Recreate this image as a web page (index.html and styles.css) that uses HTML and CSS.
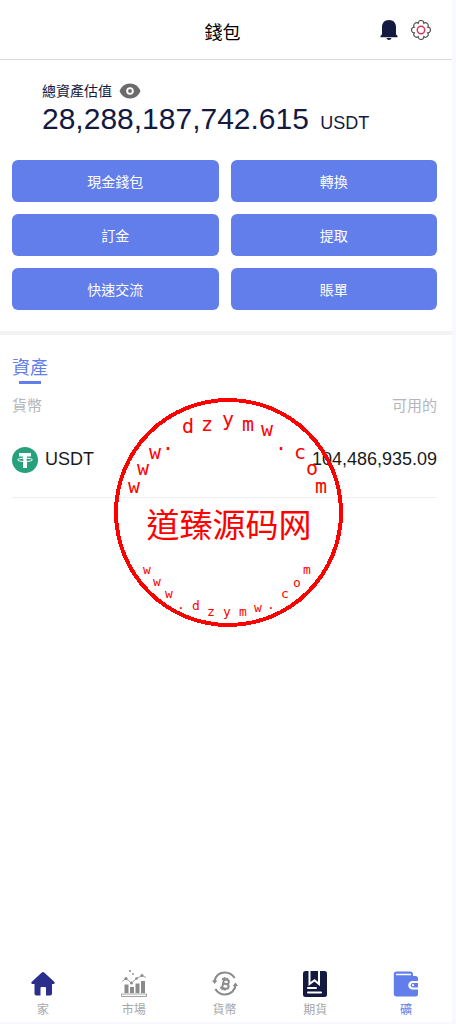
FILE: index.html
```html
<!DOCTYPE html>
<html lang="zh-Hant">
<head>
  <meta charset="UTF-8" />
  <meta name="viewport" content="width=device-width, initial-scale=1" />
  <title>錢包</title>
  <link rel="stylesheet" href="styles.css">
</head>

<body>
<div class="app">
  <header class="cabecera">
    <h1>錢包</h1>
    <div class="iconos">
      <button type="button" aria-label="通知">
        <svg width="20" height="22" viewBox="0 0 20 22" fill="#141a3f"><path d="M10 1C5.600 1 3 3.800 3 8v7.200L1.500 17v1.300h17V17L17 15.200V8c0-4.200-2.600-7-7-7zM7.600 19h4.800c-.2 1.300-1.100 2-2.400 2s-2.200-.7-2.400-2z"/></svg>
      </button>
      <button type="button" aria-label="設定">
        <svg width="20" height="20" viewBox="0 0 20 20" fill="none"><path stroke="#555" stroke-width="1.200" d="M7.200 3.300A2.800 2.800 0 0 1 12.800 3.300A2.800 2.800 0 0 1 16.700 7.200A2.800 2.800 0 0 1 16.700 12.800A2.800 2.800 0 0 1 12.800 16.700A2.800 2.800 0 0 1 7.200 16.700A2.800 2.800 0 0 1 3.300 12.800A2.800 2.800 0 0 1 3.300 7.200A2.800 2.800 0 0 1 7.200 3.300z"/><circle cx="10" cy="10" r="3.700" stroke="#e0355f" stroke-width="1.500"/></svg>
      </button>
    </div>
  </header>

  <main>
    <section class="resumen">
      <div class="saldo">
        <div class="etiqueta">
          <span>總資產估值</span>
          <button type="button" aria-label="隱藏">
            <svg width="22" height="16" viewBox="0 0 22 16"><path fill="#6b6b6b" d="M11 .5C6 .5 2.200 3.500.5 8c1.700 4.500 5.500 7.500 10.500 7.500S19.800 12.500 21.500 8C19.800 3.500 16 .5 11 .5z"/><circle cx="11" cy="8" r="3.800" fill="#fff"/><circle cx="11" cy="8" r="1.900" fill="#6b6b6b"/></svg>
          </button>
        </div>
        <p class="total">28,288,187,742.615 <small>USDT</small></p>
      </div>
      <div class="acciones">
        <button type="button">現金錢包</button>
        <button type="button">轉換</button>
        <button type="button">訂金</button>
        <button type="button">提取</button>
        <button type="button">快速交流</button>
        <button type="button">賬單</button>
      </div>
    </section>

    <section class="activos">
      <h2>資產</h2>
      <table>
        <thead>
          <tr>
            <th>貨幣</th>
            <th>可用的</th>
          </tr>
        </thead>
        <tbody>
          <tr>
            <td>
              <div class="moneda">
                <svg width="26" height="26" viewBox="0 0 26 26"><circle cx="13" cy="13" r="13" fill="#26a17b"/><path fill="#fff" d="M7 6h12v3.500h-4V12h-4V9.500H7zM11 14h4v7h-4z"/><ellipse cx="13" cy="12.800" rx="7.500" ry="1.700" fill="none" stroke="#fff"/><path fill="#fff" d="M11.300 11h3.400v4h-3.400z"/></svg>
                <span>USDT</span>
              </div>
            </td>
            <td>104,486,935.09</td>
          </tr>
        </tbody>
      </table>
    </section>
  </main>

  <nav class="menu">
    <a href="#">
      <svg width="26" height="26" viewBox="0 0 26 26" fill="#2a2f8c"><path d="M11.800 1.600a1.700 1.700 0 0 1 2.400 0l10 9.200c1 1 .5 2.200-.8 2.200H22v9.500c0 1.200-.8 2-2 2h-4V17a1 1 0 0 0-1-1h-3.500a1 1 0 0 0-1 1v7.500H6.500c-1.200 0-2-.8-2-2V13H2.600c-1.300 0-1.800-1.200-.8-2.200z"/></svg>
      <span>家</span>
    </a>
    <a href="#">
      <svg width="26" height="28" viewBox="0 0 26 28" fill="#8b8b8b"><path d="M3.500 15.500h4V24h-4zM9 18h4v6H9zM14.500 14.500h4V24h-4zM20 12h4v12h-4z"/><path fill="none" stroke="#8b8b8b" stroke-width=".8" d="M1 12.500l4-3 5.500 4.500 5-4.500L21 6.500l4 2M.5 25h25v2.500H.5z"/><circle cx="5" cy="9.500" r="1.500"/><circle cx="10.500" cy="14" r="1.500"/><circle cx="15.500" cy="9.500" r="1.300"/><circle cx="21" cy="6.500" r="1.500"/><circle cx="9" cy="2" r="1.100"/><circle cx="12" cy="5" r=".9"/></svg>
      <span>市場</span>
    </a>
    <a href="#">
      <svg width="26" height="26" viewBox="0 0 26 26" fill="none" stroke="#8b8b8b" stroke-width="2.200"><path d="M2.300 10.500C3.500 5 7.500 1.500 13 1.500c4 0 7.500 2 9.600 5.500M23.700 13.500c-.7 6-5 10-10.700 10-4 0-7.500-2-9.600-5.500"/><path fill="#8b8b8b" stroke="none" d="M0 9.500h5.400L2.600 13zM20.600 15H26l-2.500-3.500z"/><g transform="rotate(12 13 13)" stroke-width="2"><path d="M11 8.500v9M9 8.500h5c3.200 0 3.200 4.300 0 4.300h-3M9 17.500h5.500c3.500 0 3.500-4.700 0-4.700M11.500 6.500v2M14 6.500v2M11.500 17.500v2M14 17.500v2"/></g></svg>
      <span>貨幣</span>
    </a>
    <a href="#">
      <svg width="24" height="26" viewBox="0 0 24 26"><rect width="24" height="26" rx="2.500" fill="#141a3f"/><path fill="none" stroke="#fff" stroke-width="2" d="M6.500 0v13l5-3.800 4.500 3.800V0"/><path stroke="#fff" stroke-width="2" stroke-linecap="round" d="M5 17h8M5 21.500h13"/></svg>
      <span>期貨</span>
    </a>
    <a href="#" class="activo">
      <svg width="26" height="26" viewBox="0 0 26 26"><path fill="#627eea" d="M3.500.5H17a3 3 0 0 1 3 3V5h2.500A2.500 2.500 0 0 1 25 7.500V10h-5.500a4 4 0 0 0 0 8.500H25V23a2.500 2.500 0 0 1-2.500 2.500h-19A2.700 2.700 0 0 1 .8 22.800V3.200A2.700 2.700 0 0 1 3.500.5z"/><path stroke="#fff" stroke-width="1.300" stroke-linecap="round" d="M3.500 3.500h14"/><path fill="#627eea" d="M19.500 12H25v4.500h-5.500a2.300 2.300 0 0 1 0-4.500z"/><circle cx="20" cy="14.200" r="1.100" fill="#fff"/></svg>
      <span>礦</span>
    </a>
  </nav>

  <svg class="sello" width="229" height="229" viewBox="114 398 229 229">
    <circle cx="228.500" cy="512.500" r="112.500" fill="none" stroke="#f00" stroke-width="4" shape-rendering="crispEdges"/>
    <g class="arco-grande">
      <text x="134" y="493">w</text>
      <text x="143" y="475">w</text>
      <text x="155" y="459">w</text>
      <text x="168" y="450">.</text>
      <text x="188" y="433">d</text>
      <text x="207" y="431">z</text>
      <text x="228" y="426">y</text>
      <text x="248" y="431">m</text>
      <text x="267" y="436">w</text>
      <text x="281" y="450">.</text>
      <text x="300" y="459">c</text>
      <text x="312" y="475">o</text>
      <text x="321" y="493">m</text>
    </g>
    <text class="nombre" x="229" y="537">道臻源码网</text>
    <g class="arco-chico">
      <text x="147" y="574">w</text>
      <text x="157" y="586">w</text>
      <text x="169" y="598">w</text>
      <text x="181" y="609">.</text>
      <text x="196" y="610">d</text>
      <text x="211" y="616">z</text>
      <text x="227" y="616">y</text>
      <text x="243" y="616">m</text>
      <text x="258" y="612">w</text>
      <text x="271" y="609">.</text>
      <text x="285" y="598">c</text>
      <text x="297" y="587">o</text>
      <text x="307" y="574">m</text>
    </g>
  </svg>
</div>
</body>
</html>
```

FILE: styles.css
```css
* {
  box-sizing: border-box;
}

body {
  margin: 0;
  background-color: #f8f9fe;
  color: #1a1a1a;
  font-family: "Liberation Sans", "Noto Sans CJK TC", sans-serif;
}

h1, h2, p {
  margin: 0;
  font-weight: normal;
}

button {
  padding: 0;
  border: none;
  background: none;
  font-family: inherit;
  cursor: pointer;
}

svg {
  display: block;
}

.app {
  position: relative;
  display: flex;
  flex-direction: column;
  min-height: calc(100vh - 2px);
  margin: 0 4px 2px 0;
  background-color: #fff;
}

.cabecera {
  display: grid;
  grid-template-columns: 1fr auto 1fr;
  align-items: center;
  height: 60px;
  padding: 0 21px 0 14px;
  border-bottom: 1px solid #d9dbea;
}

.cabecera h1 {
  grid-column: 2;
  padding-top: 6px;
  font-size: 18px;
  line-height: 26px;
  color: #000;
}

.iconos {
  display: flex;
  align-items: center;
  justify-content: flex-end;
  gap: 12px;
}

.resumen {
  padding: 22px 15px 21px 12px;
  border-bottom: 4px solid #f3f3f3;
}

.saldo {
  padding-left: 30px;
  color: #141a3f;
}

.etiqueta {
  display: flex;
  align-items: center;
  gap: 7px;
  font-size: 14px;
  line-height: 18px;
}

.total {
  font-size: 30px;
  line-height: 38px;
}

.total small {
  margin-left: 3px;
  font-size: 18px;
}

.acciones {
  display: grid;
  grid-template-columns: 1fr 1fr;
  gap: 12px;
  margin-top: 18px;
}

.acciones button {
  height: 42px;
  border-radius: 6px;
  background-color: #627eea;
  color: #fff;
  font-size: 14px;
}

.activos {
  padding: 20px 15px 0 12px;
}

.activos h2 {
  display: inline-block;
  font-size: 18px;
  line-height: 26px;
  color: #627eea;
}

.activos h2::after {
  content: "";
  display: block;
  width: 22px;
  height: 3px;
  margin: 0 auto;
  background-color: #627eea;
}

table {
  width: 100%;
  border-collapse: collapse;
}

th {
  padding: 12px 0 7px;
  font-size: 15px;
  font-weight: normal;
  line-height: 20px;
  text-align: left;
  color: #b5b5bd;
}

td {
  height: 74px;
  padding: 0;
  border-bottom: 1px solid #f0f0f2;
  font-size: 18px;
}

th:last-child,
td:last-child {
  text-align: right;
}

.moneda {
  display: flex;
  align-items: center;
  gap: 7px;
}

.menu {
  display: flex;
  justify-content: space-between;
  margin-top: auto;
  padding: 0 31px 3px 28px;
}

.menu a {
  display: flex;
  flex-direction: column;
  align-items: center;
  justify-content: flex-end;
  gap: 4px;
  width: 30px;
  font-size: 12px;
  line-height: 18px;
  color: #a6a6a6;
  text-decoration: none;
}

.menu .activo {
  color: #627eea;
}

/* Sello por encima del contenido */
.sello {
  position: absolute;
  top: 398px;
  left: 114px;
  pointer-events: none;
}

.sello text {
  fill: #f00;
  text-anchor: middle;
  font-family: "DejaVu Sans Mono", monospace;
}

.arco-grande {
  font-size: 20px;
}

.arco-chico {
  font-size: 13px;
}

.sello .nombre {
  font-family: "Noto Sans CJK SC", sans-serif;
  font-size: 33px;
}
```
